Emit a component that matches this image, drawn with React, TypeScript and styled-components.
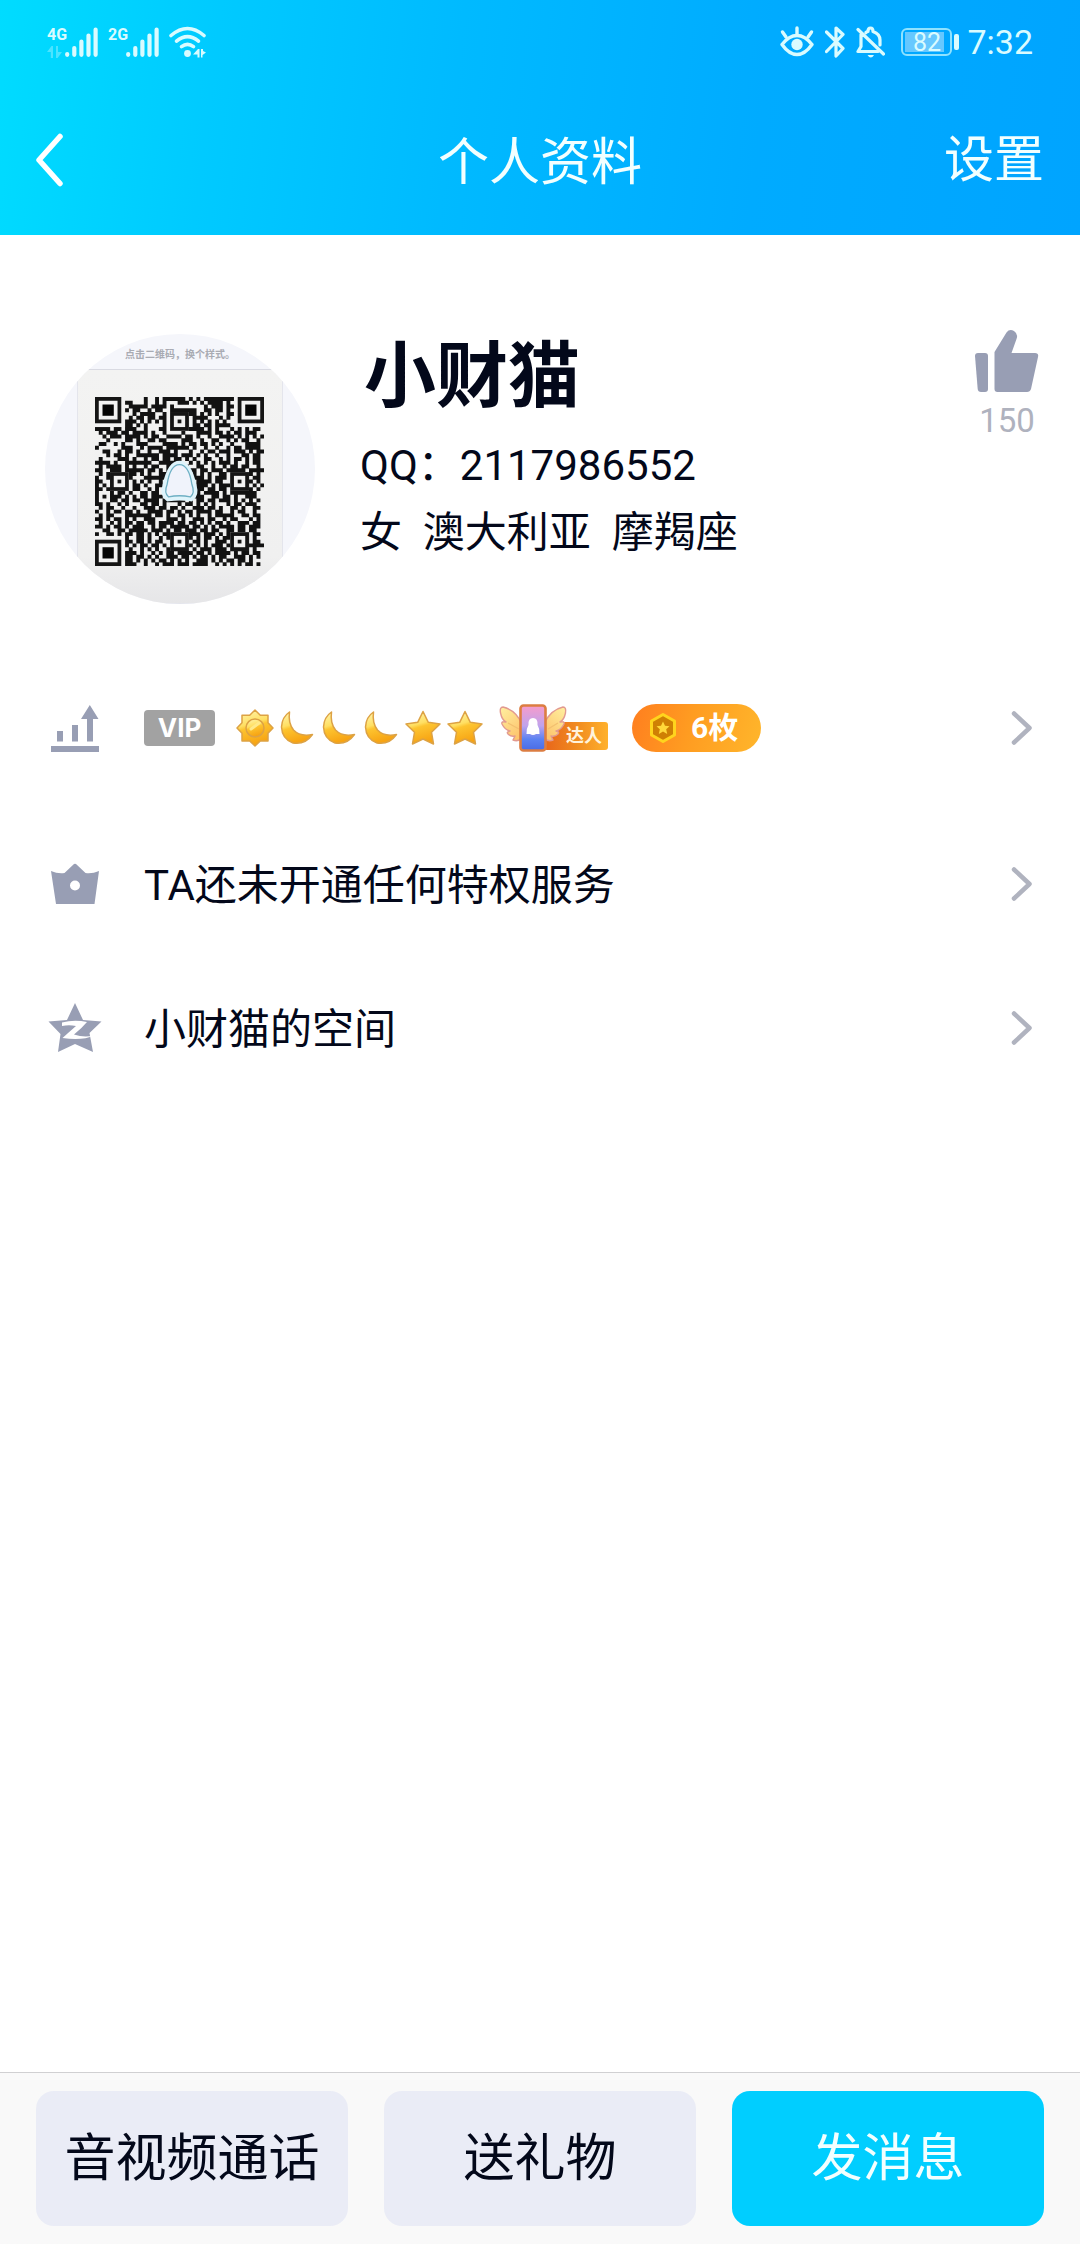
import React from "react";
import styled, { createGlobalStyle } from "styled-components";

const ink = "#03081a";
const iconGray = "#989eb4";
const chevronGray = "#b0b3bf";

const GlobalStyle = createGlobalStyle`
  *, *::before, *::after { box-sizing: border-box; }
  body {
    margin: 0;
    background: #fff;
    color: ${ink};
    font-family: Roboto, "Noto Sans CJK SC", sans-serif;
  }
  button {
    border: 0;
    padding: 0;
    background: none;
    color: inherit;
    font: inherit;
    cursor: pointer;
  }
  svg { display: block; flex: none; }
`;

const Page = styled.div`
  display: flex;
  flex-direction: column;
  min-height: 100vh;
`;

const Header = styled.header`
  background: linear-gradient(97deg, #00dcff 0%, #00caff 20%, #00baff 42%, #00abff 70%, #00a4ff 100%);
  color: #f2ffff;
`;

const StatusBar = styled.div`
  display: flex;
  align-items: center;
  justify-content: space-between;
  height: 84px;
  padding: 0 47px;
  color: #d9fbff;
`;

const StatusGroup = styled.div<{ $gap: number }>`
  display: flex;
  align-items: center;
  gap: ${(p) => p.$gap}px;
`;

const Signal = styled.div`
  display: flex;
  height: 32px;
`;

const SignalType = styled.div`
  display: flex;
  flex-direction: column;
  justify-content: space-between;
  width: 18px;
  white-space: nowrap;
  font-family: "Liberation Sans Narrow", Roboto, sans-serif;
  font-size: 16px;
  font-weight: 700;
  line-height: 18px;
`;

const Battery = styled.div`
  display: flex;
  align-items: center;
  gap: 2px;
  margin-left: 16px;

  &::after {
    content: "";
    width: 5px;
    height: 16px;
    border-radius: 2px;
    background: currentColor;
  }
`;

const BatteryCell = styled.span`
  width: 51px;
  height: 28px;
  border: 2px solid #8fe2ff;
  border-radius: 6px;
  background: linear-gradient(#66c8ff, #66c8ff) 2px 2px / 39px 20px no-repeat;
  font-size: 25px;
  line-height: 25px;
  text-align: center;
`;

const Clock = styled.time`
  margin-left: 8px;
  font-size: 34px;
  line-height: 40px;
`;

const NavBar = styled.nav`
  display: grid;
  grid-template-columns: 1fr auto 1fr;
  align-items: center;
  height: 151px;
  padding: 0 36px;
`;

const NavButton = styled.button<{ $end?: boolean }>`
  justify-self: ${(p) => (p.$end ? "end" : "start")};
  font-size: 50px;
  line-height: 60px;
`;

const Title = styled.h1`
  margin: 6px 0 0;
  font-size: 51px;
  font-weight: 400;
  line-height: 60px;
`;

const Main = styled.main`
  flex: 1;
`;

const Profile = styled.section`
  display: flex;
  padding: 99px 40px 52px 45px;
`;

const Avatar = styled.div`
  display: flex;
  flex-direction: column;
  align-items: center;
  flex: none;
  width: 270px;
  height: 270px;
  overflow: hidden;
  border-radius: 50%;
  background: #f5f6fb;
`;

const AvatarCaption = styled.span`
  padding-top: 14px;
  height: 35px;
  color: #a9abb3;
  font-size: 10px;
  font-weight: 700;
  line-height: 14px;
`;

const AvatarCard = styled.div`
  width: 206px;
  height: 235px;
  padding: 27px 0 0 17px;
  border: 1px solid #e4e5ec;
  border-top-color: #d9dae2;
  background: linear-gradient(#f3f3f2, #f0f0f0 80%, #e6e6e8);
`;

const Info = styled.div`
  flex: 1;
  margin-left: 45px;
`;

const Name = styled.h2`
  margin: 0 0 12px;
  padding-left: 4px;
  font-size: 72px;
  font-weight: 700;
  line-height: 86px;
`;

const InfoLine = styled.p`
  margin: 0;
  font-size: 42px;
  line-height: 67px;
  white-space: pre;
`;

const LikeButton = styled.button`
  display: flex;
  flex-direction: column;
  align-items: center;
  align-self: flex-start;
  gap: 8px;
  margin-top: -5px;
  color: #afb2be;
  font-size: 33px;
  line-height: 40px;
`;

const List = styled.section`
  display: flex;
  flex-direction: column;
`;

const Row = styled.button<{ $gapAfter?: boolean }>`
  display: flex;
  align-items: center;
  width: 100%;
  height: 144px;
  margin-bottom: ${(p) => (p.$gapAfter ? 12 : 0)}px;
  padding: 0 46px 0 48px;
  font-size: 42px;
  line-height: 60px;
  text-align: left;
`;

const RowIcon = styled.span`
  display: flex;
  align-items: center;
  justify-content: center;
  width: 54px;
  margin-right: 42px;
`;

const RowBody = styled.span`
  display: flex;
  flex: 1;
  align-items: center;
`;

const RowText = styled.span`
  flex: 1;
  padding-top: 4px;
`;

const VipTag = styled.span`
  width: 71px;
  height: 36px;
  margin-right: 19px;
  border-radius: 4px;
  background: #a2a2a2;
  color: #fff;
  font-family: Inter, sans-serif;
  font-size: 26px;
  font-weight: 700;
  line-height: 36px;
  text-align: center;
`;

const Talent = styled.span`
  display: flex;
  align-items: flex-end;
  margin: 0 24px 0 13px;

  svg { position: relative; }
`;

const TalentLabel = styled.span`
  width: 64px;
  height: 28px;
  margin: 0 0 2px -24px;
  padding-right: 6px;
  border-radius: 3px;
  background: linear-gradient(90deg, #e8651a, #f08a20 50%, #ffb12c);
  color: #fff3dc;
  font-size: 18px;
  font-weight: 700;
  line-height: 28px;
  text-align: right;
`;

const CoinPill = styled.span`
  display: flex;
  align-items: center;
  gap: 14px;
  height: 48px;
  padding: 0 23px 0 17px;
  border-radius: 24px;
  background: linear-gradient(105deg, #ff7e1f, #ff9c21 45%, #ffb62b);
  color: #fff;
  font-size: 30px;
  font-weight: 700;
  line-height: 48px;
`;

const Footer = styled.footer`
  display: grid;
  grid-template-columns: repeat(3, 1fr);
  gap: 36px;
  padding: 18px 36px;
  border-top: 1px solid #d0d0d2;
  background: #f9f9f9;
`;

const Action = styled.button<{ $primary?: boolean }>`
  height: 135px;
  border-radius: 18px;
  background: ${(p) => (p.$primary ? "#00ceff" : "#eaecf6")};
  color: ${(p) => (p.$primary ? "#f2ffff" : ink)};
  font-size: 51px;
  line-height: 60px;
`;

const SignalBars = () => (
  <svg width="34" height="32" viewBox="0 0 34 32" stroke="currentColor" strokeWidth="4.2" strokeLinecap="round">
    <path d="M2.2 28V28.8M9.3 22V28.8M16.4 15.5V28.8M23.5 9.5V28.8M30.6 3.5V28.8" />
  </svg>
);

const DataArrows = ({ opacity = 1 }: { opacity?: number }) => (
  <svg width="15" height="12" viewBox="0 0 15 12" fill="currentColor" opacity={opacity}>
    <path d="M6 0V12H3.8V6H0L4.5 0ZM9 0V12H10.6L15 6H11V0Z" />
  </svg>
);

const WifiIcon = () => (
  <svg width="37" height="32" viewBox="0 0 37 32" fill="none" stroke="currentColor" strokeWidth="3.6" strokeLinecap="round">
    <path d="M2 9.5Q18.500 -4.500 35 9.500" />
    <path d="M7.500 15.200Q18.500 6 29.500 15.200" />
    <path d="M12.500 20.700Q18.500 16 24.500 20.700" />
    <circle cx="18.500" cy="27.500" r="3.400" fill="currentColor" stroke="none" />
    <path d="M30.500 23V31.500H28.500V28.500H24L29 23ZM32 23V31.500H33.500V29L37 26.500L34 25V23Z" fill="currentColor" stroke="none" />
  </svg>
);

const EyeIcon = () => (
  <svg width="34" height="32" viewBox="0 0 34 32" fill="none" stroke="currentColor" strokeWidth="3.4" strokeLinecap="round" strokeLinejoin="round">
    <path d="M2 18.500Q9 9.500 17 9.500T32 18.500Q25 28.500 17 28.500T2 18.500Z" />
    <path d="M17 2V9M2.500 6L6 11M31.500 6L28 11" />
    <circle cx="17" cy="18.500" r="5.700" fill="currentColor" stroke="none" />
  </svg>
);

const BluetoothIcon = () => (
  <svg width="20" height="32" viewBox="0 0 20 32" fill="none" stroke="currentColor" strokeWidth="3.2" strokeLinecap="round" strokeLinejoin="round">
    <path d="M1.500 6L18 22.500L11 30V2L18 8.500L1.500 25.500" />
  </svg>
);

const MutedBellIcon = () => (
  <svg width="29" height="32" viewBox="0 0 29 32" fill="none" stroke="currentColor" strokeWidth="3.200" strokeLinecap="round" strokeLinejoin="round">
    <path d="M5 8.500V20.500L2 25.500H22M10 6.500Q11 5.500 12 5.500Q12 2 14.500 2T17 5.500Q24 8 24 14V19M2 3.500L27.500 28" />
    <path d="M11.500 29H18Q16.500 31.500 14.800 31.500T11.500 29Z" fill="currentColor" stroke="none" />
  </svg>
);

const BackIcon = () => (
  <svg width="30" height="56" viewBox="0 0 30 56" fill="none" stroke="#fff" strokeWidth="5.500" strokeLinecap="round" strokeLinejoin="round">
    <path d="M24 4.500L3 28L24 51.500" />
  </svg>
);

const Chevron = () => (
  <svg width="24" height="36" viewBox="0 0 24 36" fill="none" stroke={chevronGray} strokeWidth="4.500" strokeLinecap="round" strokeLinejoin="round">
    <path d="M4 3.500L19.500 18L4 32.500" />
  </svg>
);

const ThumbIcon = () => (
  <svg width="66" height="64" viewBox="0 0 66 64" fill={iconGray}>
    <path d="M4 24H11Q14 24 14 27V60Q14 63 11 63H7Q4 63 3.700 60L1 27Q1 24 4 24Z" />
    <path d="M20.500 23L32.500 3.500Q35.500 -0.500 40 2Q44.500 5 42.500 10L37.500 24H61Q65 24 64 28L57 60Q56 63 53 63H23.500Q20.500 63 20.500 60Z" />
  </svg>
);

const LevelIcon = () => (
  <svg width="50" height="50" viewBox="0 0 50 50" fill={iconGray}>
    <path d="M1 43H49V49H1ZM7 28H13V38.500H7ZM22 22H28V38.500H22ZM37 38.500V16H31L39.800 2L48.500 16H43V38.500Z" />
  </svg>
);

const CrownIcon = () => (
  <svg width="50" height="42" viewBox="0 0 50 42" fill={iconGray}>
    <path fillRule="evenodd" d="M1 8Q8 11 14.500 10L24 1Q25 0.300 26 1L35.500 10Q42 11 49 8L44.500 41H6ZM25 17.500A5 5 0 1 0 25 27.500A5 5 0 1 0 25 17.500Z" />
  </svg>
);

const QzoneIcon = () => (
  <svg width="54" height="52" viewBox="0 0 54 52">
    <path fill={iconGray} d="M27 1L35 18L53.500 19.500L41.500 31L45 50L27 42L10 50L12.500 32L0.500 19.500L19 18Z" />
    <path fill="#fff" d="M14 20.500Q26 17.500 39 20Q34 26 26 32.500Q36 36 46 33.500Q34 39 14.500 36Q20 31 28 24Q21 22.500 14 24Z" />
  </svg>
);

const GoldDefs = () => (
  <svg width="0" height="0" aria-hidden="true">
    <defs>
      <linearGradient id="gold" x1="0" y1="0" x2="0.300" y2="1">
        <stop offset="0" stopColor="#fff6b4" />
        <stop offset="0.450" stopColor="#ffdf62" />
        <stop offset="0.550" stopColor="#fdc430" />
        <stop offset="1" stopColor="#f7a413" />
      </linearGradient>
    </defs>
  </svg>
);

const rankShapes = {
  sun: "M21 3L26.300 8.200H34V15.700L39 21L34 26.300V34H26.300L21 39L15.700 34H8V26.300L3 21L8 15.700V8.200H15.700Z",
  moon: "M13.500 5Q6 10 5.500 20Q6 32 17 36Q29 38 36.500 27.500Q24 30 17.500 23Q12 16 13.500 5Z",
  star: "M21 4.500L26.300 15.300L38 17L29.500 25.300L31.500 37L21 32L10.500 37L12.500 25.300L4 17L15.700 15.300Z",
};

const RankIcon = ({ kind }: { kind: keyof typeof rankShapes }) => (
  <svg width="42" height="42" viewBox="0 0 42 42" fill="url(#gold)" stroke="#dda244" strokeWidth="1.500" strokeLinejoin="round">
    <path d={rankShapes[kind]} />
    {kind === "sun" && <circle cx="21" cy="21" r="9" />}
    {kind === "sun" && <path d="M17 22L25 16" stroke="#ffe98a" strokeWidth="3" strokeLinecap="round" />}
  </svg>
);

const WingedPhone = () => (
  <svg width="69" height="48" viewBox="0 0 69 48">
    <defs>
      <linearGradient id="screen" x1="0" y1="0" x2="0" y2="1">
        <stop offset="0" stopColor="#f79ccb" />
        <stop offset="0.450" stopColor="#c0a3ec" />
        <stop offset="0.750" stopColor="#5b82f2" />
        <stop offset="1" stopColor="#4a6be4" />
      </linearGradient>
      <linearGradient id="wing" x1="0" y1="0" x2="0.600" y2="1">
        <stop offset="0" stopColor="#fff0a0" />
        <stop offset="1" stopColor="#fdc56e" />
      </linearGradient>
      <path id="wingShape" d="M23 20Q17 6 4 3Q0.500 3 1.500 9Q3 16 7 18Q2 17 3 20Q6 26 11 27Q7 28 9 30Q12 33 16 32L14 36Q19 38 23 34Z" />
    </defs>
    <g fill="url(#wing)" stroke="#e29a90" strokeWidth="1.400" strokeLinejoin="round">
      <use href="#wingShape" />
      <use href="#wingShape" transform="matrix(-1 0 0 1 68 0)" />
      <path d="M9 19L20 25M59 19L49 25" fill="none" stroke="#f3c070" />
    </g>
    <rect x="21.500" y="1.500" width="25" height="45" rx="3" fill="url(#screen)" stroke="#dc7d42" strokeWidth="2.600" />
    <path fill="#fff" d="M27.500 30Q27 25 29.500 21Q29 14 34 14T38.500 21Q41 25 40.500 30H37Q34 32 31 30Z" />
  </svg>
);

const CoinIcon = () => (
  <svg width="28" height="32" viewBox="0 0 28 32">
    <path d="M14 2.500L25.500 9V23L14 29.500L2.500 23V9Z" fill="#cf8004" stroke="#ffd41d" strokeWidth="3" strokeLinejoin="round" />
    <path d="M14 9.500L16 13.800L20.500 14.200L17.200 17.300L18.200 22L14 19.600L9.800 22L10.800 17.300L7.500 14.200L12 13.800Z" fill="#ffd83a" />
  </svg>
);

const qrRows = [
  ".............#..#.######.#.#.###########.....",
  "........##...#..#.#...###.#.#.####.#.........",
  ".........#####.####.#........#.###.##........",
  "........#.##..#.##..#######..##.##.#.........",
  "..........#.####..#.##...##.#.#.#..##........",
  ".........#.##.##.##.#.....####...#.#.........",
  "........###.#.#.#.#.#.#.#.#.#.#.#.#..........",
  "........##.#.#....#.#...#.##.##.####.........",
  "####.##.###..#...##.#########.#.#...#.#.#.##.",
  ".#.###.##.####.#..#....#...####.##.#.##.###..",
  "..#.###.####.#.##..####.##.#..#..####.#.#.#.#",
  "...#....##.#..##.##....###..#..##..#.#.##..#.",
  ".##..#.#...###....####.#.##.##.#.#..#...####.",
  "#......###..#.####.######.#..#..#..#.##.####.",
  "..##..#.##.#..#..###.#...#..#.##.###.###.#.##",
  "...#.##.#..######.####.###.#.#..#..#...##.##.",
  ".#....###.#..#.##.##.##.#.#..##..#.#.##.#.##.",
  "####.#..#######..######..#.#.#.#.###.#..#.##.",
  ".#.####.#.#..#.##..##...#..##..#..#.##.##..#.",
  "##..###.#####.##.#.#.....##.##.###.#####.####",
  ".#.#..#.###.#.#..###......#.#.#..##.##..##.#.",
  "#..#.#.#.#...######.......###.#.###.#####.##.",
  "##..#..##.#.#.#..#.........####.##..#...##.#.",
  "#.#.#####.##.#..##.........###.#.####.#.#.#.#",
  "##.##..##.##..#.#..........##.##.##.#...##.#.",
  "#...#.##.#..##.##.#.......##.####.#.#######..",
  "#.#.###.#.#.##.###.#.....####..##.##.#..###..",
  "#...##.##.##.####.######.#.##.##.###.#.#.#.#.",
  "##.#..#.#...##.##.#...#.##.#.#.#...#.##.###..",
  ".#.##..#..#..###.##.##.#..###.##.#..##.#..##.",
  "#..#.##.##.#..####.##.#.##.####.##..#.##..#..",
  ".#.##...#######.##.#..##.#.#..#.#####..##.##.",
  "##.#.##.#.#..###...###.#..###.##..#.##...#.#.",
  ".#..#.#.##.##.##.####.##.##.#.#.##.#..###.##.",
  "##.#.##.#.###..#.##.#####.##.#.#.####.##.###.",
  "..##..##.#####.###.#.##.###.##.##..##.##.##..",
  "#..##.#.##.##.#.#.##########.###.#.######.##.",
  "........#..##.#..#.##...##.#.##.#.##...##.#..",
  "........##.##.#.##..#.#.#.##.#..###.#.#.#.##.",
  "........#.#.##.##.#.#...##.#.#.###.##...#####",
  ".........#..#.#.#..######.#.###.###.#####.#..",
  "........###.#..#.#.##.####.##.#.####.#.##.##.",
  "........##.##.#.#..###.##.#.##.#.##..###.#.#.",
  "........##.#.#.#.##.#.#.#..###.#.#.##.##.#...",
  "........###..#..#.###.###.####..#.#.#.#.##.#.",
];

const finders = [[0, 0], [38, 0], [0, 38]];
const alignments = [[22, 6], [6, 22], [38, 22], [22, 38], [38, 38]];

const QrCode = () => (
  <svg width="169" height="169" viewBox="0 0 45 45" role="img" aria-label="二维码">
    <path
      fill="#121212"
      d={qrRows.map((row, y) => [...row].map((c, x) => (c === "#" ? `M${x} ${y}h1.040v1.040h-1.040z` : "")).join("")).join("")}
    />
    {finders.map(([x, y]) => (
      <g key={`f${x}-${y}`} transform={`translate(${x} ${y})`}>
        <rect x="-1" y="-1" width="9" height="9" fill="#f2f2f2" />
        <rect x="0.500" y="0.500" width="6" height="6" fill="none" stroke="#151515" />
        <rect x="2" y="2" width="3" height="3" fill="#050505" />
      </g>
    ))}
    {alignments.map(([x, y]) => (
      <g key={`a${x}-${y}`} transform={`translate(${x - 2} ${y - 2})`}>
        <rect width="5" height="5" fill="#f2f2f2" />
        <rect x="0.500" y="0.500" width="4" height="4" fill="none" stroke="#151515" />
        <rect x="2" y="2" width="1" height="1" fill="#151515" />
      </g>
    ))}
    <path d="M19.500 27Q18 26 18.800 23.500Q20 17.800 22.500 17.800T26.200 23.500Q27 26 25.500 27Q22.500 26.500 19.500 27Z" fill="#f0f3fb" stroke="#dff4fb" strokeWidth="1.600" />
    <path d="M19.600 26.600Q18.300 25.500 19.200 23.300Q20 18 22.500 18T25.800 23.300Q26.700 25.500 25.400 26.600Q22.500 26 19.600 26.600Z" fill="#f0f3fb" stroke="#6fb0c4" strokeWidth="0.350" />
  </svg>
);

export default function App() {
  return (
    <Page>
      <GlobalStyle />
      <GoldDefs />
      <Header>
        <StatusBar>
          <StatusGroup $gap={9}>
            <Signal>
              <SignalType>4G<DataArrows opacity={0.35} /></SignalType>
              <SignalBars />
            </Signal>
            <Signal>
              <SignalType>2G</SignalType>
              <SignalBars />
            </Signal>
            <WifiIcon />
          </StatusGroup>
          <StatusGroup $gap={0}>
            <StatusGroup $gap={11}>
              <EyeIcon />
              <BluetoothIcon />
              <MutedBellIcon />
            </StatusGroup>
            <Battery>
              <BatteryCell>82</BatteryCell>
            </Battery>
            <Clock>7:32</Clock>
          </StatusGroup>
        </StatusBar>
        <NavBar>
          <NavButton aria-label="返回"><BackIcon /></NavButton>
          <Title>个人资料</Title>
          <NavButton $end>设置</NavButton>
        </NavBar>
      </Header>

      <Main>
        <Profile>
          <Avatar>
            <AvatarCaption>点击二维码，换个样式。</AvatarCaption>
            <AvatarCard><QrCode /></AvatarCard>
          </Avatar>
          <Info>
            <Name>小财猫</Name>
            <InfoLine>QQ：2117986552</InfoLine>
            <InfoLine>{"女  澳大利亚  摩羯座"}</InfoLine>
          </Info>
          <LikeButton>
            <ThumbIcon />
            150
          </LikeButton>
        </Profile>

        <List>
          <Row $gapAfter>
            <RowIcon><LevelIcon /></RowIcon>
            <RowBody>
              <VipTag>VIP</VipTag>
              <RankIcon kind="sun" />
              <RankIcon kind="moon" />
              <RankIcon kind="moon" />
              <RankIcon kind="moon" />
              <RankIcon kind="star" />
              <RankIcon kind="star" />
              <Talent>
                <WingedPhone />
                <TalentLabel>达人</TalentLabel>
              </Talent>
              <CoinPill><CoinIcon />6枚</CoinPill>
            </RowBody>
            <Chevron />
          </Row>
          <Row>
            <RowIcon><CrownIcon /></RowIcon>
            <RowText>TA还未开通任何特权服务</RowText>
            <Chevron />
          </Row>
          <Row>
            <RowIcon><QzoneIcon /></RowIcon>
            <RowText>小财猫的空间</RowText>
            <Chevron />
          </Row>
        </List>
      </Main>

      <Footer>
        <Action>音视频通话</Action>
        <Action>送礼物</Action>
        <Action $primary>发消息</Action>
      </Footer>
    </Page>
  );
}
